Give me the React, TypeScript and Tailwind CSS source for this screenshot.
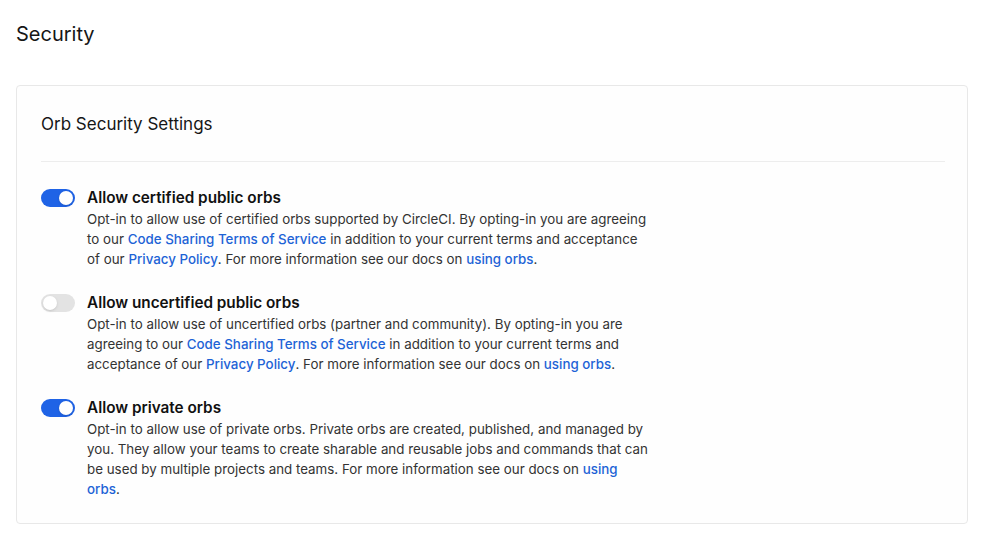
import { useState } from "react";

const Link = ({ children }: { children: React.ReactNode }) => (
  <a href="#" className="font-medium text-[#1d63d6]">
    {children}
  </a>
);

function Toggle({ on, onClick }: { on: boolean; onClick: () => void }) {
  return (
    <button
      onClick={onClick}
      className={`relative mt-[2px] h-[18px] w-[34px] shrink-0 rounded-full ${on ? "bg-[#1f63e6]" : "bg-[#e3e3e3]"}`}
    >
      <span
        className={`absolute top-[2px] h-[14px] w-[14px] rounded-full bg-white shadow-sm ${on ? "left-[18px]" : "left-[2px]"}`}
      />
    </button>
  );
}

export default function App() {
  const [toggles, setToggles] = useState([true, false, true]);
  const flip = (i: number) => setToggles((t) => t.map((v, j) => (j === i ? !v : v)));

  // line breaks follow the original wrapping
  const items = [
    {
      title: "Allow certified public orbs",
      body: (
        <>
          Opt-in to allow use of certified orbs supported by CircleCI. By opting-in you are agreeing
          <br />
          to our <Link>Code Sharing Terms of Service</Link> in addition to your current terms and acceptance
          <br />
          of our <Link>Privacy Policy</Link>. For more information see our docs on <Link>using orbs</Link>.
        </>
      ),
    },
    {
      title: "Allow uncertified public orbs",
      body: (
        <>
          Opt-in to allow use of uncertified orbs (partner and community). By opting-in you are
          <br />
          agreeing to our <Link>Code Sharing Terms of Service</Link> in addition to your current terms and
          <br />
          acceptance of our <Link>Privacy Policy</Link>. For more information see our docs on{" "}
          <Link>using orbs</Link>.
        </>
      ),
    },
    {
      title: "Allow private orbs",
      body: (
        <>
          Opt-in to allow use of private orbs. Private orbs are created, published, and managed by
          <br />
          you. They allow your teams to create sharable and reusable jobs and commands that can
          <br />
          be used by multiple projects and teams. For more information see our docs on <Link>using</Link>
          <br />
          <Link>orbs</Link>.
        </>
      ),
    },
  ];

  return (
    <div className="min-h-[533px] bg-white px-4 pt-[21px] text-[#161616]" style={{ fontFamily: "Inter, sans-serif" }}>
      <h1 className="text-[20px] leading-[26px]">Security</h1>

      <div className="mt-[38px] w-[952px] rounded-[4px] border border-[#e8e8e8] bg-[#fefefe] px-6 pb-[24px]">
        <h2 className="pt-[27px] pb-[26px] text-[17px] leading-[22px]">Orb Security Settings</h2>
        <div className="h-px w-[904px] bg-[#ededed]" />

        {/* settings list */}
        <div className="mt-[25px] flex flex-col gap-[23px]">
          {items.map((it, i) => (
            <div key={it.title} className="flex items-start gap-3">
              <Toggle on={toggles[i]} onClick={() => flip(i)} />
              <div className="w-[620px]">
                <h3 className="text-[15.3px] font-semibold leading-[22px] text-[#111]">{it.title}</h3>
                <p className="text-[13.35px] leading-[20px] text-[#333]">{it.body}</p>
              </div>
            </div>
          ))}
        </div>
      </div>
    </div>
  );
}
